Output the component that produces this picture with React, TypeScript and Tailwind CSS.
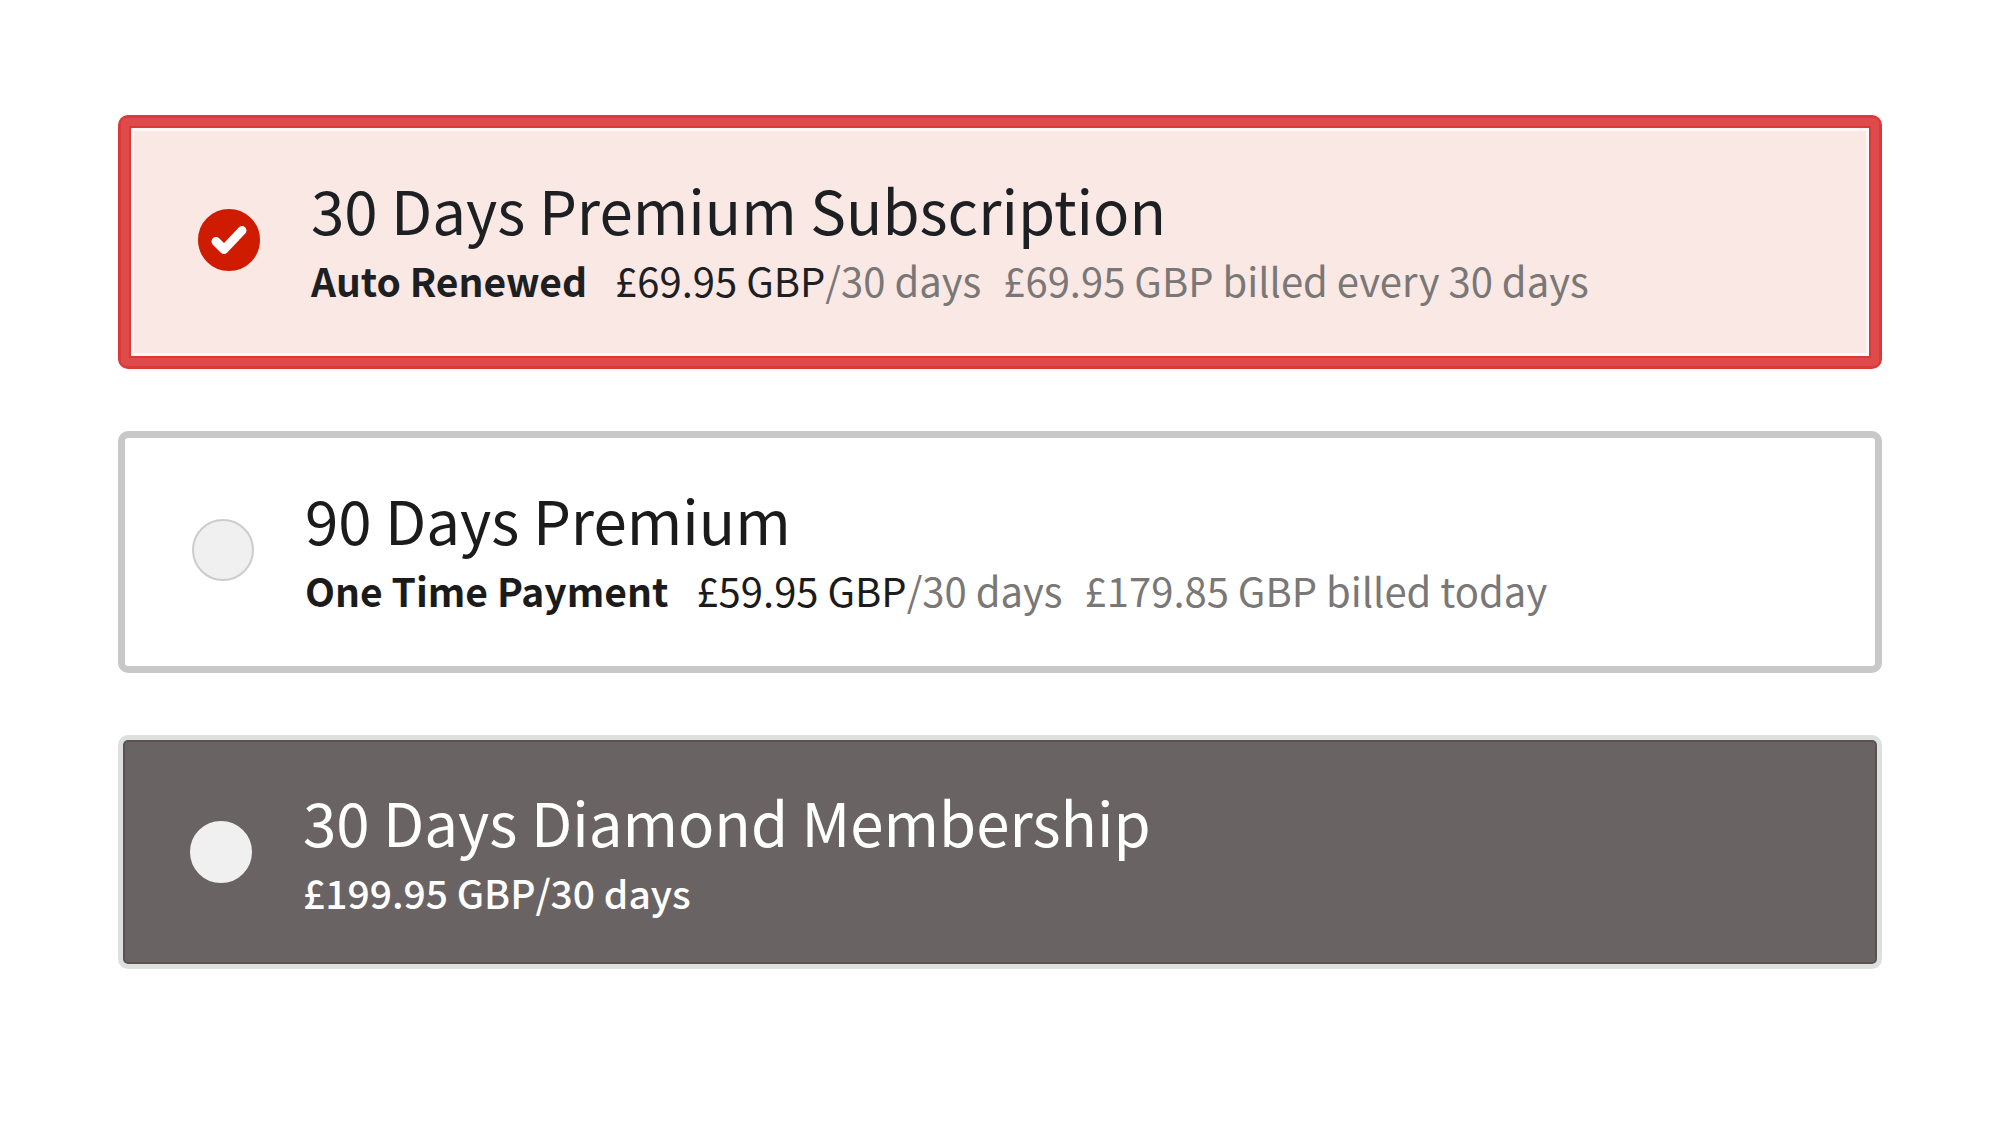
import clsx from 'clsx';

type Plan = {
  id: string;
  title: string;
  tag?: string;
  price: string;
  period: string;
  note?: string;
  card: string;
  details: string;
  muted: string;
  radio: string;
};

const plans: Plan[] = [
  {
    id: 'premium-30',
    title: '30 Days Premium Subscription',
    tag: 'Auto Renewed',
    price: '£69.95 GBP',
    period: '/30 days',
    note: '£69.95 GBP billed every 30 days',
    card: 'border-[3px] border-[#dc3838] bg-[#fae8e5] text-[#1d2022] pl-[77px] pt-[49px] pb-[57px] shadow-[inset_0_0_0_8px_#df4a4a,inset_0_0_0_10px_#dc3838,inset_0_0_0_13px_#fff6f5]',
    details: 'text-[40px] font-normal',
    muted: 'text-[#7a7777]',
    radio: 'border-[#cf1b00]',
  },
  {
    id: 'premium-90',
    title: '90 Days Premium',
    tag: 'One Time Payment',
    price: '£59.95 GBP',
    period: '/30 days',
    note: '£179.85 GBP billed today',
    card: 'border-[7px] border-[#c8c8c8] bg-white text-[#1b1b1b] pl-[67px] pt-[39px] pb-[47px]',
    details: 'text-[40px] font-normal',
    muted: 'text-[#7a7777]',
    radio: 'border-[#ccc]',
  },
  {
    id: 'diamond-30',
    title: '30 Days Diamond Membership',
    price: '£199.95 GBP',
    period: '/30 days',
    card: 'border-[5px] border-[#dedfdf] bg-[#696463] text-white pl-[67px] pt-[39px] pb-[43px] shadow-[inset_0_0_0_2px_#5a5252]',
    details: 'text-[39px] font-medium',
    muted: 'text-white',
    radio: 'border-[#f0f0f0]',
  },
];

function PlanOption({ plan }: { plan: Plan }) {
  return (
    <label className={clsx('flex items-center rounded-[10px] gap-[51px] cursor-pointer', plan.card)}>
      <span className="grid shrink-0 place-items-center pt-1">
        <input
          type="radio"
          name="plan"
          value={plan.id}
          defaultChecked={plan.id === 'premium-30'}
          className={clsx(
            'peer col-start-1 row-start-1 size-[62px] appearance-none rounded-full border-2 bg-[#f0f0f0] checked:bg-[#cf1b00]',
            plan.radio,
          )}
        />
        <svg
          viewBox="0 0 36 30"
          className="pointer-events-none col-start-1 row-start-1 hidden h-[30px] w-9 peer-checked:block"
          fill="none"
          stroke="#fff"
          strokeWidth="9"
          strokeLinecap="round"
          strokeLinejoin="round">
          <path d="M5 16.5l8 8L31 5.5" />
        </svg>
      </span>
      <span className="flex flex-col whitespace-nowrap">
        <span className="text-[60px] leading-[84px]">{plan.title}</span>
        <span className={clsx('flex items-baseline leading-[58px]', plan.details)}>
          {plan.tag && <strong className="mr-7 text-[39px] font-bold">{plan.tag}</strong>}
          <span>{plan.price}</span>
          <span className={plan.muted}>{plan.period}</span>
          {plan.note && <span className={clsx('ml-[22px]', plan.muted)}>{plan.note}</span>}
        </span>
      </span>
    </label>
  );
}

export default function App() {
  return (
    <main className="min-h-screen bg-white px-[118px] pt-[115px] font-['Noto_Sans_CJK_SC',sans-serif]">
      <fieldset aria-label="Membership" className="flex flex-col gap-[62px]">
        {plans.map(plan => (
          <PlanOption key={plan.id} plan={plan} />
        ))}
      </fieldset>
    </main>
  );
}
